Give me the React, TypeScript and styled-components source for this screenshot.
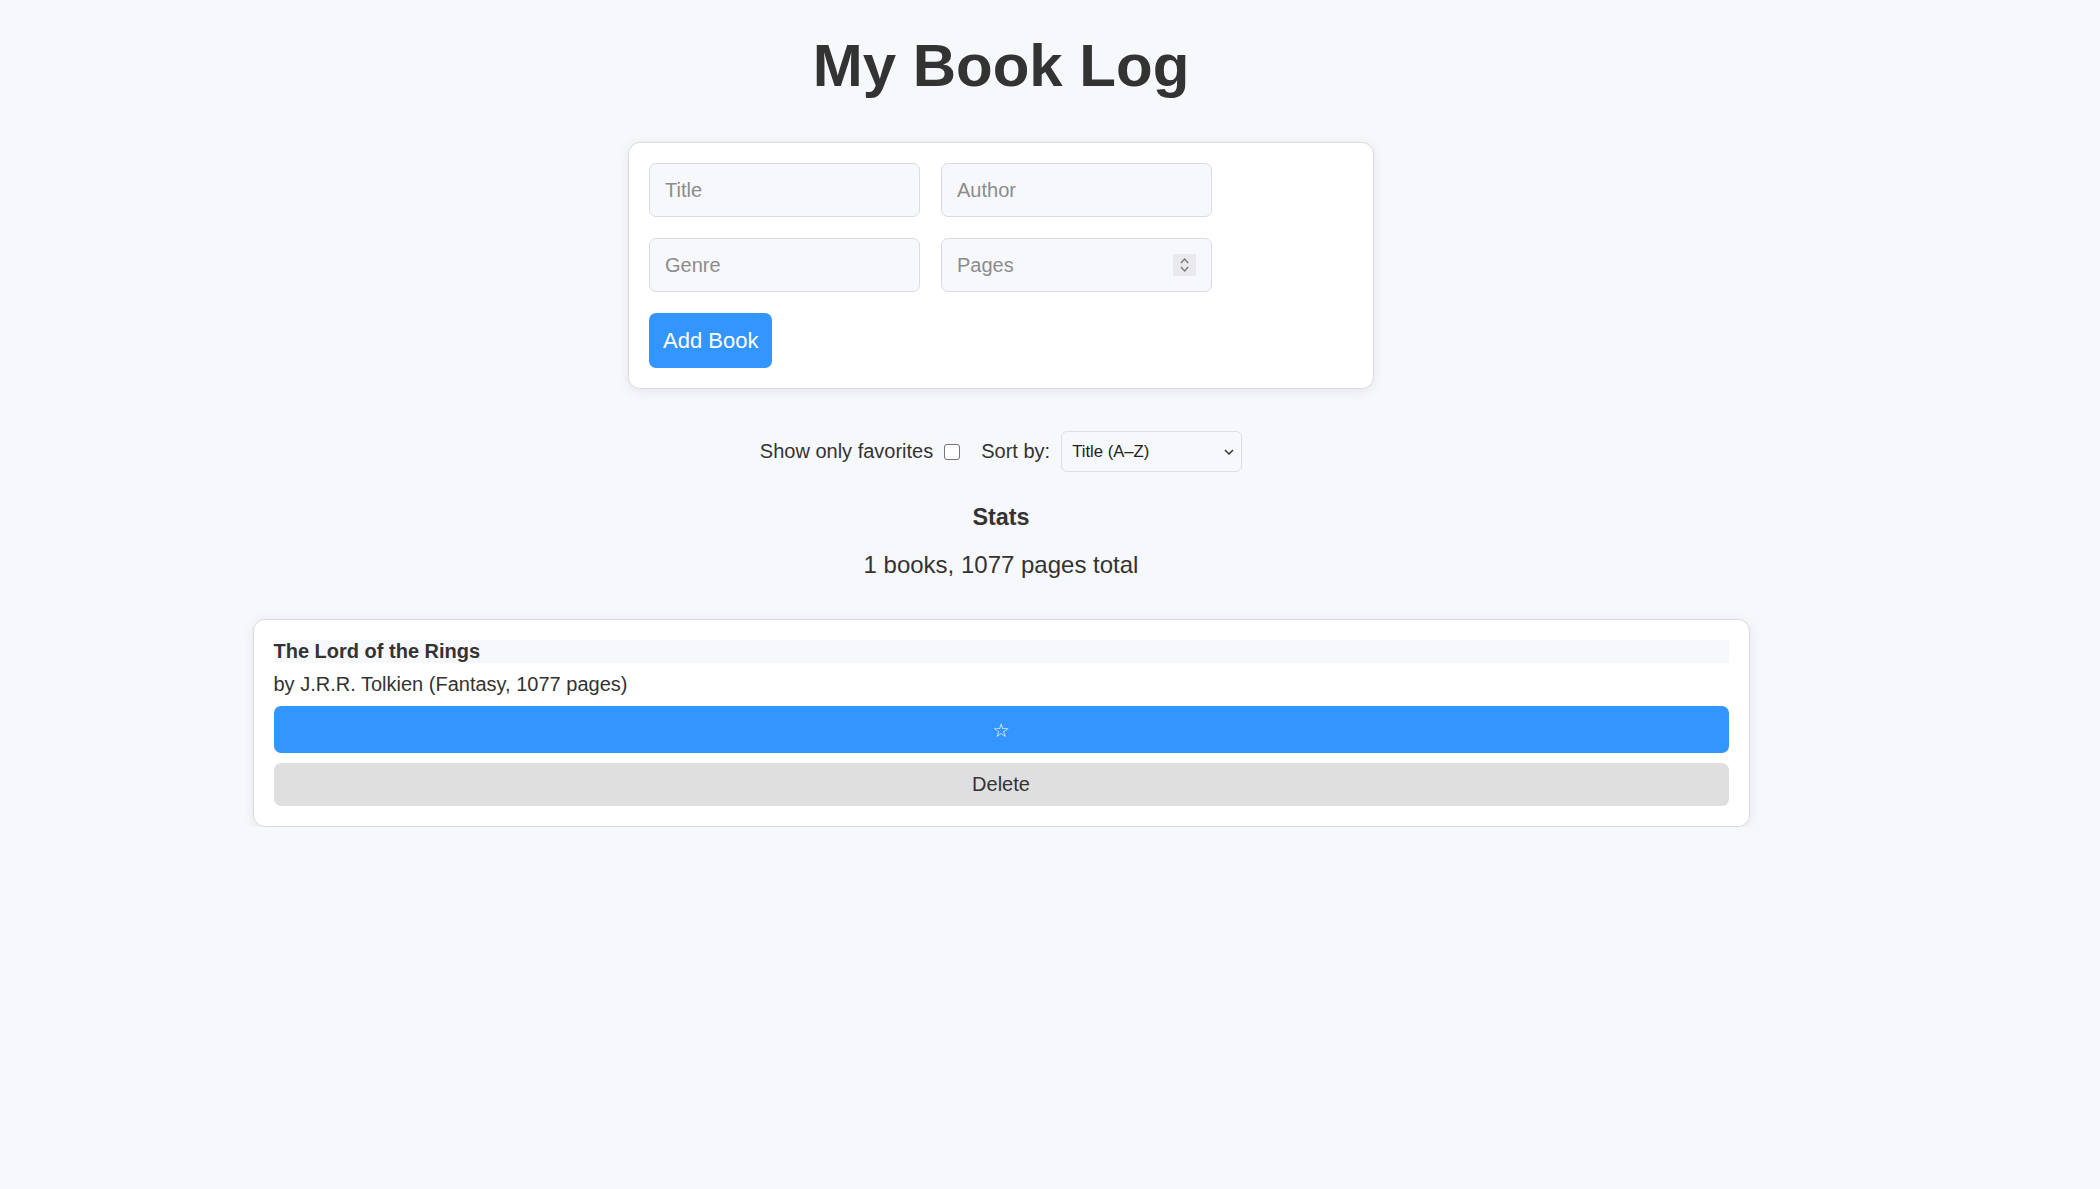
import React, { useState } from "react";
import styled, { createGlobalStyle } from "styled-components";

const GlobalStyle = createGlobalStyle`
  html, body {
    margin: 0;
    padding: 0;
    background: #f7f8fc;
  }
  body {
    font-family: "Liberation Sans", Arial, Helvetica, sans-serif;
    color: #333;
  }
  *, *::before, *::after { box-sizing: border-box; }
`;

const Page = styled.main`
  width: 2002px;
  display: flex;
  flex-direction: column;
  align-items: center;
`;

const Heading = styled.h1`
  margin: 31px 0 42px;
  font-size: 60px;
  line-height: 69px;
  font-weight: 700;
  color: #333;
`;

const FormCard = styled.form`
  width: 746px;
  padding: 20px;
  background: #fff;
  border: 1px solid #dcdcdf;
  border-radius: 12px;
  box-shadow: 0 2px 12px rgba(0, 0, 0, 0.08);
  display: grid;
  grid-template-columns: repeat(2, 271px);
  gap: 21px;
`;

const TextInput = styled.input`
  width: 271px;
  height: 54px;
  padding: 1px 15px 0;
  font-family: inherit;
  font-size: 20px;
  color: #333;
  background: #f7f8fc;
  border: 1px solid #dcdce0;
  border-radius: 7px;
  outline: none;
  &::placeholder { color: #8c8c8c; }
  &::-webkit-inner-spin-button,
  &::-webkit-outer-spin-button {
    -webkit-appearance: none;
    margin: 0;
  }
  -moz-appearance: textfield;
`;

const FieldWrap = styled.div`
  position: relative;
  width: 271px;
  height: 54px;
`;

const Spinner = styled.span`
  position: absolute;
  right: 16px;
  top: 50%;
  transform: translateY(-50%);
  width: 23px;
  height: 22px;
  background: #e9e9ee;
  display: flex;
  align-items: center;
  justify-content: center;
  pointer-events: none;
`;

const AddButton = styled.button`
  grid-column: 1 / -1;
  justify-self: start;
  height: 55px;
  padding: 0 14px;
  font-family: inherit;
  font-size: 22px;
  color: #fff;
  background: #3395ff;
  border: none;
  border-radius: 7px;
  cursor: pointer;
`;

const Controls = styled.div`
  margin-top: 42px;
  height: 41px;
  display: flex;
  align-items: center;
  gap: 21px;
  font-size: 20px;
  color: #333;
`;

const InlineLabel = styled.label`
  display: flex;
  align-items: center;
  gap: 11px;
`;

const Checkbox = styled.input`
  appearance: none;
  -webkit-appearance: none;
  width: 16px;
  height: 16px;
  margin: 0;
  background: #fff;
  border: 1px solid #767676;
  border-radius: 3px;
`;

const SelectWrap = styled.span`
  position: relative;
  display: inline-flex;
`;

const Select = styled.select`
  appearance: none;
  -webkit-appearance: none;
  width: 181px;
  height: 41px;
  padding: 0 28px 0 10px;
  font-family: inherit;
  font-size: 16.67px;
  color: #222;
  background: #f7f8fc;
  border: 1px solid #dedee3;
  border-radius: 6px;
  outline: none;
`;

const SelectArrow = styled.svg`
  position: absolute;
  right: 8px;
  top: 50%;
  transform: translateY(-50%);
  pointer-events: none;
`;

const StatsTitle = styled.h3`
  margin: 32px 0 0;
  font-size: 23.4px;
  line-height: 27px;
  font-weight: 700;
  color: #333;
`;

const StatsText = styled.p`
  margin: 20px 0 0;
  font-size: 24px;
  line-height: 28px;
  color: #333;
`;

const BookList = styled.ul`
  list-style: none;
  margin: 40px 0 0;
  padding: 0;
  width: 1497px;
`;

const BookCard = styled.li`
  padding: 20px;
  background: #fff;
  border: 1px solid #dcdcdf;
  border-radius: 12px;
  box-shadow: 0 2px 12px rgba(0, 0, 0, 0.08);
  display: flex;
  flex-direction: column;
  gap: 10px;
`;

const BookTitle = styled.strong`
  display: block;
  background: #f7f8fc;
  font-size: 20px;
  line-height: 23px;
  font-weight: 700;
  color: #333;
`;

const BookMeta = styled.span`
  display: block;
  font-size: 20px;
  line-height: 23px;
  color: #333;
`;

const ActionButton = styled.button<{ $variant: "fav" | "delete" }>`
  width: 100%;
  height: ${(p) => (p.$variant === "fav" ? "47px" : "43px")};
  border: none;
  border-radius: 7px;
  font-family: ${(p) =>
    p.$variant === "fav" ? '"DejaVu Sans", sans-serif' : "inherit"};
  font-size: ${(p) => (p.$variant === "fav" ? "19px" : "20px")};
  color: ${(p) => (p.$variant === "fav" ? "#fff" : "#333")};
  background: ${(p) => (p.$variant === "fav" ? "#3395ff" : "#dfdfdf")};
  cursor: pointer;
`;

type Book = {
  id: number;
  title: string;
  author: string;
  genre: string;
  pages: number;
  favorite: boolean;
};

export default function App() {
  const [books] = useState<Book[]>([
    {
      id: 1,
      title: "The Lord of the Rings",
      author: "J.R.R. Tolkien",
      genre: "Fantasy",
      pages: 1077,
      favorite: false,
    },
  ]);
  const total = books.reduce((s, b) => s + b.pages, 0);

  return (
    <>
      <GlobalStyle />
      <Page>
        <Heading>My Book Log</Heading>
        <FormCard onSubmit={(e) => e.preventDefault()}>
          <TextInput placeholder="Title" />
          <TextInput placeholder="Author" />
          <TextInput placeholder="Genre" />
          <FieldWrap>
            <TextInput type="number" placeholder="Pages" />
            <Spinner>
              <svg width="23" height="22" viewBox="0 0 23 22">
                <polyline
                  points="8,9 11.6,5 15.2,9"
                  fill="none"
                  stroke="#777"
                  strokeWidth="1.3"
                />
                <polyline
                  points="8,13 11.6,17 15.2,13"
                  fill="none"
                  stroke="#777"
                  strokeWidth="1.3"
                />
              </svg>
            </Spinner>
          </FieldWrap>
          <AddButton type="submit">Add Book</AddButton>
        </FormCard>

        <Controls>
          <InlineLabel>
            Show only favorites
            <Checkbox type="checkbox" />
          </InlineLabel>
          <InlineLabel>
            Sort by:
            <SelectWrap>
              <Select defaultValue="title">
                <option value="title">Title (A–Z)</option>
                <option value="author">Author (A–Z)</option>
                <option value="pages">Pages</option>
              </Select>
              <SelectArrow width="10" height="6" viewBox="0 0 10 6">
                <polyline
                  points="1,1 5,5 9,1"
                  fill="none"
                  stroke="#333"
                  strokeWidth="1.5"
                />
              </SelectArrow>
            </SelectWrap>
          </InlineLabel>
        </Controls>

        <StatsTitle>Stats</StatsTitle>
        <StatsText>
          {books.length} books, {total} pages total
        </StatsText>

        <BookList>
          {books.map((b) => (
            <BookCard key={b.id}>
              <BookTitle>{b.title}</BookTitle>
              <BookMeta>
                by {b.author} ({b.genre}, {b.pages} pages)
              </BookMeta>
              <ActionButton $variant="fav">{b.favorite ? "★" : "☆"}</ActionButton>
              <ActionButton $variant="delete">Delete</ActionButton>
            </BookCard>
          ))}
        </BookList>
      </Page>
    </>
  );
}
